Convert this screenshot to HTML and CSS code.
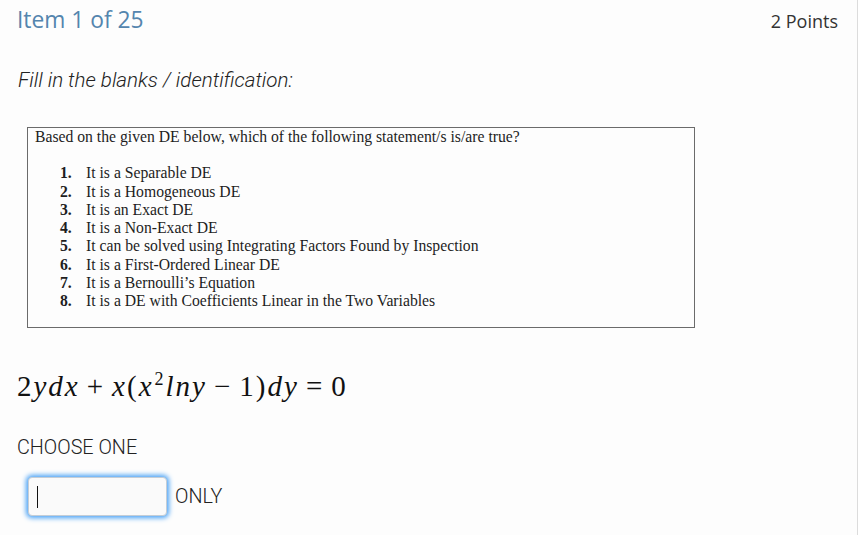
FILE: index.html
```html
<!DOCTYPE html>
<html>
<head>
<meta charset="utf-8">
<link rel="stylesheet" href="styles.css">
</head>
<body>
<div class="page">
  <div class="card">
    <div class="header">
      <div class="item-title">Item 1 of 25</div>
      <div class="points">2 Points</div>
    </div>
    <div class="instructions">Fill in the blanks / identification:</div>
    <div class="question-box">
      <p class="q-lead">Based on the given DE below, which of the following statement/s is/are true?</p>
      <ol class="q-list">
        <li><span class="num">1.</span><span>It is a Separable DE</span></li>
        <li><span class="num">2.</span><span>It is a Homogeneous DE</span></li>
        <li><span class="num">3.</span><span>It is an Exact DE</span></li>
        <li><span class="num">4.</span><span>It is a Non-Exact DE</span></li>
        <li><span class="num">5.</span><span>It can be solved using Integrating Factors Found by Inspection</span></li>
        <li><span class="num">6.</span><span>It is a First-Ordered Linear DE</span></li>
        <li><span class="num">7.</span><span>It is a Bernoulli’s Equation</span></li>
        <li><span class="num">8.</span><span>It is a DE with Coefficients Linear in the Two Variables</span></li>
      </ol>
    </div>
    <div class="equation"><span class="up">2</span>ydx<span class="up op">+</span>x<span class="up">(</span>x<sup class="up">2</sup>lny<span class="up op">−</span><span class="up">1)</span>dy<span class="up op">=</span><span class="up">0</span></div>
    <div class="choose">CHOOSE ONE</div>
    <div class="answer-row">
      <div class="answer-input"><span class="caret"></span></div>
      <span class="only">ONLY</span>
    </div>
  </div>
</div>
</body>
</html>
```
FILE: styles.css
```css
html, body {
  margin: 0;
  padding: 0;
  background: #ffffff;
}
.page {
  width: 866px;
  height: 535px;
  overflow: hidden;
  background: #ffffff;
}
.card {
  width: 858px;
  height: 535px;
  box-sizing: border-box;
  border-right: 1px solid #dcdcdc;
  background: #fdfdfd;
  padding: 4px 0 0 0;
}
.header {
  display: flex;
  justify-content: space-between;
  align-items: flex-start;
  padding: 0 19px 0 17px;
}
.item-title {
  font-family: "Open Sans", sans-serif;
  font-size: 22.8px;
  line-height: 31px;
  color: #5485ae;
}
.points {
  font-family: "Open Sans", sans-serif;
  font-size: 18px;
  line-height: 34px;
  color: #333333;
}
.instructions {
  margin: 29px 0 0 18px;
  font-family: Roboto, sans-serif;
  font-weight: 300;
  font-style: italic;
  font-size: 20.6px;
  line-height: 26px;
  color: #222222;
}
.question-box {
  margin: 34px 0 0 27px;
  width: 668px;
  height: 201px;
  box-sizing: border-box;
  border: 1px solid #6b6b6b;
  padding: 0 0 0 7px;
  font-family: "Liberation Serif", "Times New Roman", serif;
  font-size: 15.7px;
  color: #1e1e1e;
}
.q-lead {
  margin: 0;
  line-height: 18.3px;
}
.q-list {
  list-style: none;
  margin: 18px 0 0 0;
  padding: 0 0 0 25px;
}
.q-list li {
  display: flex;
  line-height: 18.3px;
}
.num {
  font-weight: bold;
  width: 26px;
}
.equation {
  margin: 41px 0 0 17px;
  font-family: "Liberation Serif", "Times New Roman", serif;
  font-style: italic;
  font-size: 29px;
  line-height: 34px;
  color: #111111;
  letter-spacing: 2px;
}
.equation .up {
  font-style: normal;
}
.equation .op {
  margin: 0 7px;
}
.equation sup {
  font-size: 18px;
  vertical-align: 11px;
  line-height: 0;
  margin-left: 1px;
}
.choose {
  margin: 33px 0 0 17px;
  font-family: Roboto, sans-serif;
  font-weight: 300;
  font-size: 19.8px;
  line-height: 24px;
  color: #222222;
}
.answer-row {
  display: flex;
  align-items: center;
  margin: 17px 0 0 28px;
  gap: 8px;
}
.answer-input {
  width: 139px;
  height: 39px;
  box-sizing: border-box;
  border: 1px solid #c4cdd6;
  border-radius: 4px;
  background: #fafafa;
  box-shadow: 0 0 5px 2px rgba(70, 160, 245, 1);
  display: flex;
  align-items: center;
  padding-left: 8px;
}
.caret {
  width: 1px;
  height: 22px;
  background: #111111;
}
.only {
  font-family: Roboto, sans-serif;
  font-weight: 300;
  font-size: 19.8px;
  color: #222222;
}
```
